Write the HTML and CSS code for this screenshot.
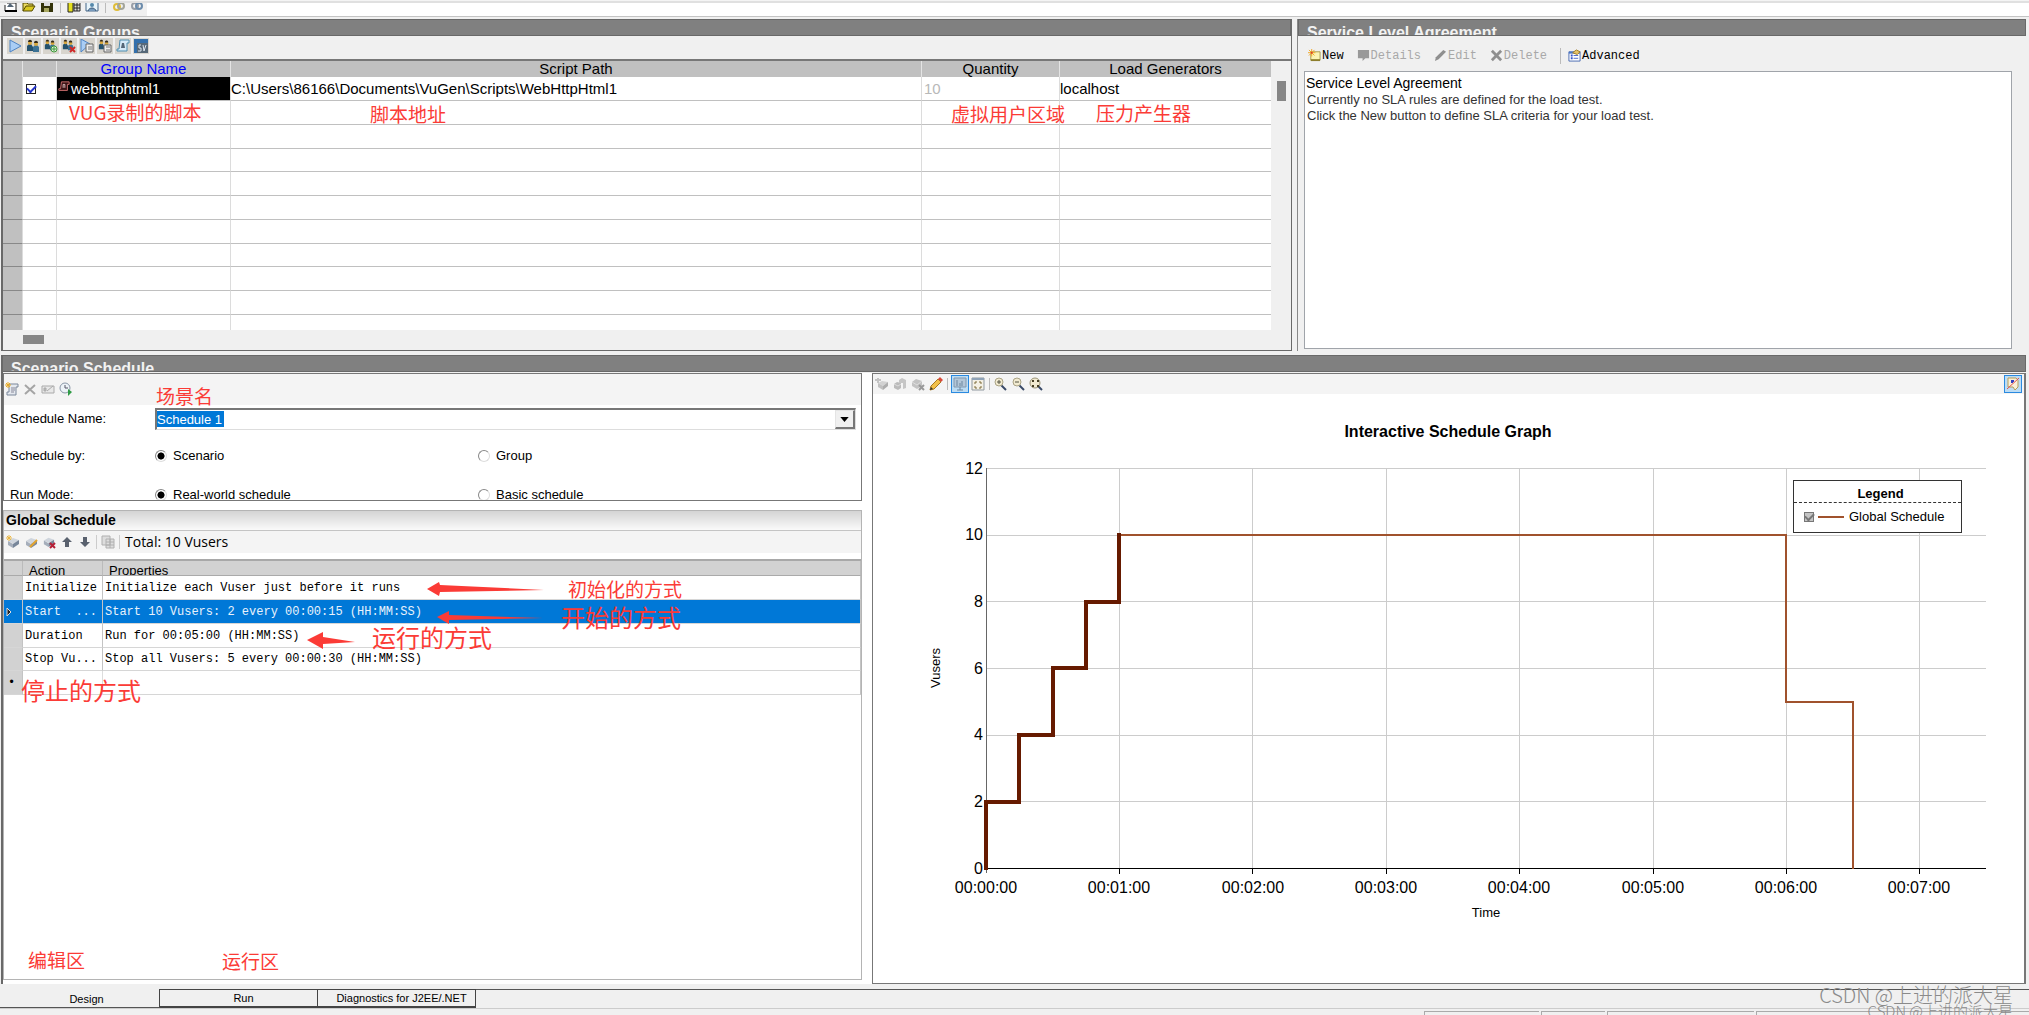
FILE: index.html
```html
<!DOCTYPE html>
<html lang="en">
<head>
<meta charset="utf-8">
<title>LoadRunner Controller - Scenario Design</title>
<link rel="stylesheet" href="styles.css">
</head>
<body>
<svg class="symbols" aria-hidden="true">
  <symbol id="new-doc" viewBox="0 0 14 14"><path d="M3 4h9v8H1V6" fill="#fff" stroke="#222"/><path d="M3 8l3-4 4 4z" fill="#567"/><path d="M1 12h12" stroke="#000" stroke-width="2"/></symbol>
  <symbol id="open" viewBox="0 0 14 14"><path d="M1 12V4h4l1 1h5v2" fill="#e8d860" stroke="#554a00"/><path d="M1 12l3-5h9l-3 5z" fill="#d9c820" stroke="#554a00"/></symbol>
  <symbol id="save" viewBox="0 0 14 14"><path d="M1 3h12v10H1z" fill="#33330a"/><path d="M4 3h6v4H4z" fill="#ddd"/><path d="M4 9h5v4H4z" fill="#a8a860"/></symbol>
  <symbol id="design" viewBox="0 0 14 14"><path d="M1 2h5v11H1z" fill="#e5df20" stroke="#222"/><path d="M7 3h6v9H7z" fill="#ddd" stroke="#222"/><path d="M7 6h6M7 9h6M10 3v9" stroke="#222"/></symbol>
  <symbol id="host" viewBox="0 0 14 14"><path d="M1 2h12v10H1z" fill="#e8f4fa" stroke="#468"/><circle cx="7" cy="6" r="2" fill="#58a"/><path d="M3 12c1-4 7-4 8 0" fill="#79b" stroke="#357"/></symbol>
  <symbol id="rings-y" viewBox="0 0 14 14"><g fill="none" stroke-width="2"><circle cx="5" cy="8" r="3" stroke="#e0bd38"/><circle cx="9" cy="7" r="3" stroke="#a3a59a"/></g></symbol>
  <symbol id="rings-b" viewBox="0 0 14 14"><g fill="none" stroke-width="2"><circle cx="5" cy="7" r="3" stroke="#999fa8"/><circle cx="9" cy="7" r="3" stroke="#6c8cac"/></g></symbol>
  <symbol id="play" viewBox="0 0 14 14"><path d="M2 1l11 6-11 6z" fill="#a9cdf5" stroke="#4f84c4"/></symbol>
  <symbol id="people" viewBox="0 0 14 14"><path d="M1 12V7l2-2h2l2 3v4z" fill="#24526e"/><path d="M7 13V8l2-2h2l2 2v5z" fill="#3c7295"/><circle cx="4" cy="4" r="2" fill="#d8a73c"/><circle cx="10" cy="5" r="2" fill="#d8a73c"/><path d="M2 3c0-3 4-3 4 0M8 4c0-3 4-3 4 0" fill="#332a1a"/></symbol>
  <symbol id="people-add" viewBox="0 0 14 14"><use href="#people" width="12" height="12"/><circle cx="10" cy="10" r="3" fill="#dff0dc" stroke="#3f9a3a"/><path d="M8 10h4M10 8v4" stroke="#3f9a3a"/></symbol>
  <symbol id="people-del" viewBox="0 0 14 14"><use href="#people" width="12" height="12"/><path d="M8 8l5 5M13 8l-5 5" stroke="#d02828" stroke-width="2"/></symbol>
  <symbol id="play-doc" viewBox="0 0 14 14"><path d="M1 0l9 5-9 8z" fill="#a9cdf5" stroke="#4f84c4"/><path d="M6 5h7v8H6z" fill="#eee" stroke="#666"/><path d="M8 8h4M8 10h4" stroke="#777"/></symbol>
  <symbol id="people-doc" viewBox="0 0 14 14"><use href="#people" width="12" height="12"/><path d="M6 6h7v7H6z" fill="#eee" stroke="#666"/><path d="M8 8h4M8 11h4" stroke="#777"/></symbol>
  <symbol id="scroll" viewBox="0 0 14 14"><path d="M4 1h9v3h-2v8H1v-2h2z" fill="#d6eaf8" stroke="#4f8eb0"/><path d="M5 9l1-5h2l1 5z" fill="#567"/></symbol>
  <symbol id="sv" viewBox="0 0 14 14"><path d="M0 0h14v14H0z" fill="#3470ac"/><path d="M3 4h11v10H3z" fill="#576978"/><path d="M7 6H5v3h2v3H4M9 6l1 6 2-6" fill="none" stroke="#dde6f0"/></symbol>
  <symbol id="add-page" viewBox="0 0 14 14"><path d="M3 3h10v9H3z" fill="#fbf5b4" stroke="#a89a48"/><path d="M3 12h10" stroke="#8d7e2c" stroke-width="2"/><path d="M4 0v8M0 4h8M1 1l6 6M7 1L1 7" stroke="#f0a520"/><circle cx="4" cy="4" r="1" fill="#d33"/></symbol>
  <symbol id="details" viewBox="0 0 14 14"><path d="M1 1h12v9H9l-3 3v-3H1z" fill="#999"/></symbol>
  <symbol id="pen" viewBox="0 0 14 14"><path d="M1 13l1-4 8-8 3 2-8 8z" fill="#8f8f8f"/></symbol>
  <symbol id="cross" viewBox="0 0 14 14"><path d="M2 2l10 10M12 2L2 12" stroke="#8f8f8f" stroke-width="3"/></symbol>
  <symbol id="cross-thin" viewBox="0 0 14 14"><path d="M2 3l10 9M12 3L2 12" stroke="#a5a5a5" stroke-width="2"/></symbol>
  <symbol id="advanced" viewBox="0 0 14 14"><path d="M1 3h12v10H1z" fill="#fff" stroke="#4668b0"/><path d="M1 3h12v2H1z" fill="#4a78c8"/><path d="M3 7h2M3 10h2" stroke="#35c" stroke-width="2"/><path d="M6 7h5M6 10h5" stroke="#46c"/><path d="M5 4l4-3 4 2-3 3z" fill="#e5c368" stroke="#a07c28"/></symbol>
  <symbol id="new-sched" viewBox="0 0 14 14"><path d="M4 2h9v3h-2v8H2v-3h2z" fill="#e4e8ee" stroke="#7a879a"/><path d="M6 6h4M6 8h4M6 10h3" stroke="#889"/><path d="M3 0v6M0 3h6M1 1l4 4M5 1L1 5" stroke="#e8aa25"/></symbol>
  <symbol id="rename" viewBox="0 0 14 14"><path d="M1 4h12v7H1z" fill="#e8e8e8" stroke="#aaa"/><path d="M3 6h2v3H3zM6 9l6-5" fill="#bbb" stroke="#aaa"/></symbol>
  <symbol id="clock" viewBox="0 0 14 14"><circle cx="6" cy="6" r="5" fill="#edf3f8" stroke="#8b98a8"/><path d="M6 3v3h3" fill="none" stroke="#556"/><path d="M9 7l4 3-4 4z" fill="#2f9b45"/></symbol>
  <symbol id="brick" viewBox="0 0 14 14"><path d="M2 6l5-3 6 2-5 4z" fill="#cfd5dd"/><path d="M2 6v4l5 3V9z" fill="#a5aebb"/><path d="M7 9l6-4v4l-6 4z" fill="#77869a"/></symbol>
  <symbol id="brick-add" viewBox="0 0 14 14"><use href="#brick" width="14" height="14"/><path d="M3 0v6M0 3h6M1 1l4 4M5 1L1 5" stroke="#eab745"/></symbol>
  <symbol id="brick-edit" viewBox="0 0 14 14"><use href="#brick" width="14" height="14"/><path d="M6 12l7-7" stroke="#e3a52e" stroke-width="2"/></symbol>
  <symbol id="brick-del" viewBox="0 0 14 14"><use href="#brick" width="13" height="13"/><path d="M8 8l5 5M13 8l-5 5" stroke="#b51f36" stroke-width="2"/></symbol>
  <symbol id="up" viewBox="0 0 14 14"><path d="M7 2l5 5H9v5H5V7H2z" fill="#59616e"/></symbol>
  <symbol id="down" viewBox="0 0 14 14"><path d="M7 12l5-5H9V2H5v5H2z" fill="#59616e"/></symbol>
  <symbol id="copy" viewBox="0 0 14 14"><path d="M1 1h8v9H1zM5 4h8v9H5z" fill="#ddd" stroke="#b0b0b0"/><path d="M5 7h8M5 10h8M9 4v9" stroke="#b0b0b0"/></symbol>
  <symbol id="g-add" viewBox="0 0 14 14"><path d="M3 6l4-2 6 1-5 4z" fill="#d2d2d2"/><path d="M3 6v4l5 3V9z" fill="#c0c0c0"/><path d="M8 9l5-4v4l-5 4z" fill="#adadad"/><path d="M3 1v5M0 3h6" stroke="#c4c4c4" stroke-width="2"/></symbol>
  <symbol id="g-split" viewBox="0 0 14 14"><path d="M1 7l3-2 4 1v5l-3 2-4-2z" fill="#bbb"/><path d="M6 3l3-2 4 2v8l-3 1V6H6z" fill="#c6c6c6"/><path d="M1 7l4 2 3-2" fill="none" stroke="#ddd"/></symbol>
  <symbol id="g-brick-del" viewBox="0 0 14 14"><path d="M1 5l4-3 6 2v5l-5 3-5-3z" fill="#c3c3c3"/><path d="M1 5l5 3 5-4" fill="none" stroke="#ddd"/><path d="M8 8l5 5M13 8l-5 5" stroke="#999" stroke-width="2"/></symbol>
  <symbol id="pencil" viewBox="0 0 14 14"><path d="M1 13l1-4 7-7 3 3-7 7z" fill="#f2c14a" stroke="#a87920"/><path d="M9 2l2-2 3 3-2 2z" fill="#d84a3a"/><path d="M1 13l1-3 2 2z" fill="#333"/></symbol>
  <symbol id="monitor" viewBox="0 0 14 14"><path d="M1 1h12v9H1z" fill="#b3c6d8" stroke="#8298ae"/><path d="M4 9V3M7 9V6M9 9V4M4 13h6M7 10v3" stroke="#6d87a0" fill="none"/></symbol>
  <symbol id="fit" viewBox="0 0 14 14"><path d="M1 1h12v12H1z" fill="#f4f0e4" stroke="#8f989f"/><path d="M1 1h12v2H1z" fill="#8fa3b8"/><path d="M4 7V5h2M8 5h2v2M4 9v2h2M8 11h2V9" fill="none" stroke="#7d6a38"/></symbol>
  <symbol id="zoom-in" viewBox="0 0 14 14"><path d="M8 8l5 5" stroke="#394a68" stroke-width="2"/><circle cx="6" cy="5" r="4" fill="#f1ead0" stroke="#aaa385"/><path d="M4 5h4M6 3v4" stroke="#554"/></symbol>
  <symbol id="zoom-out" viewBox="0 0 14 14"><path d="M8 8l5 5" stroke="#394a68" stroke-width="2"/><circle cx="6" cy="5" r="4" fill="#f1ead0" stroke="#aaa385"/><path d="M4 5h4" stroke="#554"/></symbol>
  <symbol id="zoom-fit" viewBox="0 0 14 14"><path d="M9 9l4 4" stroke="#394a68" stroke-width="2"/><circle cx="6" cy="6" r="5" fill="#f1ead0" stroke="#999275"/><path d="M4 5V4h1M8 4h1v1M4 8v1h1M8 9h1V8" fill="none" stroke="#443d22" stroke-width="2"/></symbol>
  <symbol id="no-legend" viewBox="0 0 14 14"><path d="M2 1h8l2 2v7l-3 3-2-3H2z" fill="#f8f0da" stroke="#b79d58"/><path d="M5 4h3M6 3v3" stroke="#3340c0" stroke-width="2"/><path d="M1 12L13 1" stroke="#e05050"/></symbol>
</svg>

<header class="app-toolbar">
  <div class="app-tools">
    <button aria-label="New"><svg><use href="#new-doc"/></svg></button>
    <button aria-label="Open"><svg><use href="#open"/></svg></button>
    <button aria-label="Save"><svg><use href="#save"/></svg></button>
    <span class="sep"></span>
    <button aria-label="Design view"><svg><use href="#design"/></svg></button>
    <button aria-label="Load generators"><svg><use href="#host"/></svg></button>
    <span class="sep"></span>
    <button aria-label="Connect"><svg><use href="#rings-y"/></svg></button>
    <button aria-label="Disconnect"><svg><use href="#rings-b"/></svg></button>
  </div>
</header>

<main>
  <div class="top-row">
    <section class="groups">
      <h2 class="title">Scenario Groups</h2>
      <div class="group-tools">
        <button aria-label="Start"><svg><use href="#play"/></svg></button>
        <button aria-label="Vusers"><svg><use href="#people"/></svg></button>
        <button aria-label="Add group"><svg><use href="#people-add"/></svg></button>
        <button aria-label="Remove group"><svg><use href="#people-del"/></svg></button>
        <button aria-label="Run-time settings"><svg><use href="#play-doc"/></svg></button>
        <button aria-label="Details"><svg><use href="#people-doc"/></svg></button>
        <button aria-label="View script"><svg><use href="#scroll"/></svg></button>
        <button aria-label="Service virtualization"><svg><use href="#sv"/></svg></button>
      </div>
      <div class="grid-area">
        <div class="grid-clip">
          <table class="group-grid">
            <colgroup><col class="c-sel"><col class="c-check"><col class="c-name"><col><col class="c-qty"><col class="c-gen"></colgroup>
            <thead><tr><th></th><th></th><th class="sorted">Group Name</th><th>Script Path</th><th>Quantity</th><th>Load Generators</th></tr></thead>
            <tbody>
              <tr><td></td><td><input type="checkbox" class="tick" checked aria-label="Enable webhttphtml1"></td><td class="picked"><svg viewBox="0 0 14 14"><path d="M4 1h9v3h-2v7H1V9h2z" fill="#3a1416" stroke="#d77"/><path d="M6 8V4h2v4" fill="none" stroke="#ecc"/></svg>webhttphtml1</td><td>C:\Users\86166\Documents\VuGen\Scripts\WebHttpHtml1</td><td class="dim">10</td><td>localhost</td></tr>
              <tr><td></td><td></td><td></td><td></td><td></td><td></td></tr>
              <tr><td></td><td></td><td></td><td></td><td></td><td></td></tr>
              <tr><td></td><td></td><td></td><td></td><td></td><td></td></tr>
              <tr><td></td><td></td><td></td><td></td><td></td><td></td></tr>
              <tr><td></td><td></td><td></td><td></td><td></td><td></td></tr>
              <tr><td></td><td></td><td></td><td></td><td></td><td></td></tr>
              <tr><td></td><td></td><td></td><td></td><td></td><td></td></tr>
              <tr><td></td><td></td><td></td><td></td><td></td><td></td></tr>
              <tr><td></td><td></td><td></td><td></td><td></td><td></td></tr>
              <tr><td></td><td></td><td></td><td></td><td></td><td></td></tr>
            </tbody>
          </table>
        </div>
        <div class="vbar"><span></span></div>
        <div class="hbar"><span></span></div>
      </div>
    </section>

    <section class="sla">
      <h2 class="title">Service Level Agreement</h2>
      <div class="sla-tools">
        <button><svg><use href="#add-page"/></svg>New</button>
        <button disabled><svg><use href="#details"/></svg>Details</button>
        <button disabled><svg><use href="#pen"/></svg>Edit</button>
        <button disabled><svg><use href="#cross"/></svg>Delete</button>
        <span class="sep"></span>
        <button><svg><use href="#advanced"/></svg>Advanced</button>
      </div>
      <div class="sla-box">
        <h3>Service Level Agreement</h3>
        <p>Currently no SLA rules are defined for the load test.</p>
        <p>Click the New button to define SLA criteria for your load test.</p>
      </div>
    </section>
  </div>

  <section class="schedule">
    <h2 class="title">Scenario Schedule</h2>
    <div class="bottom-row">
      <div class="left-col">
        <form class="definition">
          <div class="tools sched-tools">
            <button type="button" aria-label="New schedule"><svg><use href="#new-sched"/></svg></button>
            <button type="button" aria-label="Delete schedule"><svg><use href="#cross-thin"/></svg></button>
            <button type="button" aria-label="Rename schedule"><svg><use href="#rename"/></svg></button>
            <button type="button" aria-label="Start time"><svg><use href="#clock"/></svg></button>
          </div>
          <div class="field">
            <label for="sname">Schedule Name:</label>
            <div class="combo"><input id="sname" type="text" value="Schedule 1"><button type="button" aria-label="Show schedules"><svg viewBox="0 0 10 6"><path d="M0 0h10L5 6z"/></svg></button></div>
          </div>
          <div class="field choices">
            <span>Schedule by:</span>
            <label><input type="radio" name="by" checked>Scenario</label>
            <label><input type="radio" name="by">Group</label>
          </div>
          <div class="field choices last">
            <span>Run Mode:</span>
            <label><input type="radio" name="mode" checked>Real-world schedule</label>
            <label><input type="radio" name="mode">Basic schedule</label>
          </div>
        </form>

        <div class="global">
          <h3>Global Schedule</h3>
          <div class="tools global-tools">
            <button aria-label="Add action"><svg><use href="#brick-add"/></svg></button>
            <button aria-label="Edit action"><svg><use href="#brick-edit"/></svg></button>
            <button aria-label="Delete action"><svg><use href="#brick-del"/></svg></button>
            <button aria-label="Move up"><svg><use href="#up"/></svg></button>
            <button aria-label="Move down"><svg><use href="#down"/></svg></button>
            <span class="sep"></span>
            <button aria-label="Copy"><svg><use href="#copy"/></svg></button>
            <span class="sep"></span>
            <span class="total">Total: 10 Vusers</span>
          </div>
          <table class="actions">
            <colgroup><col class="a-sel"><col class="a-name"><col></colgroup>
            <thead><tr><th></th><th><div>Action</div></th><th><div>Properties</div></th></tr></thead>
            <tbody>
              <tr><td></td><td>Initialize</td><td>Initialize each Vuser just before it runs</td></tr>
              <tr class="current"><td><svg viewBox="0 0 6 10"><path d="M1 1l4 4-4 4z" fill="#222" stroke="#ddd"/></svg></td><td>Start&nbsp; ...</td><td>Start 10 Vusers: 2 every 00:00:15 (HH:MM:SS)</td></tr>
              <tr><td></td><td>Duration</td><td>Run for 00:05:00 (HH:MM:SS)</td></tr>
              <tr><td></td><td>Stop Vu...</td><td>Stop all Vusers: 5 every 00:00:30 (HH:MM:SS)</td></tr>
              <tr><td class="fresh">•</td><td></td><td></td></tr>
            </tbody>
          </table>
        </div>
      </div>

      <div class="graph">
        <div class="tools graph-tools">
          <button aria-label="Add"><svg><use href="#g-add"/></svg></button>
          <button aria-label="Split"><svg><use href="#g-split"/></svg></button>
          <button aria-label="Delete"><svg><use href="#g-brick-del"/></svg></button>
          <button aria-label="Edit graph"><svg><use href="#pencil"/></svg></button>
          <span class="sep"></span>
          <button class="pressed" aria-label="Show graph"><svg><use href="#monitor"/></svg></button>
          <button aria-label="Full view"><svg><use href="#fit"/></svg></button>
          <span class="sep"></span>
          <button aria-label="Zoom in"><svg><use href="#zoom-in"/></svg></button>
          <button aria-label="Zoom out"><svg><use href="#zoom-out"/></svg></button>
          <button aria-label="Zoom reset"><svg><use href="#zoom-fit"/></svg></button>
          <button class="pressed end" aria-label="Toggle legend"><svg><use href="#no-legend"/></svg></button>
        </div>
        <div class="chart">
          <svg class="plot" viewBox="0 0 1151 580" preserveAspectRatio="xMinYMin meet" role="img" aria-label="Interactive Schedule Graph">
            <text class="plot-title" x="575" y="43">Interactive Schedule Graph</text>
            <g transform="translate(113 74)">
              <path class="gridlines" d="M0 .5H1000M0 67.5H1000M0 133.5H1000M0 200.5H1000M0 267.5H1000M0 333.5H1000M133.5 0V400M266.5 0V400M400.5 0V400M533.5 0V400M667.5 0V400M800.5 0V400M933.5 0V400"/>
              <path class="y-axis" d="M.5 0V405"/>
              <path class="x-axis" d="M0 400.5H1000M133.5 400V406M266.5 400V406M400.5 400V406M533.5 400V406M667.5 400V406M800.5 400V406M933.5 400V406"/>
              <path class="run" d="M133 67H800V234H867V401"/>
              <path class="ramp" d="M0 400V334H33V267H67V200H100V134H133V67"/>
              <g class="y-labels"><text x="-3" y="6">12</text><text x="-3" y="72">10</text><text x="-3" y="139">8</text><text x="-3" y="206">6</text><text x="-3" y="272">4</text><text x="-3" y="339">2</text><text x="-3" y="406">0</text></g>
              <g class="x-labels"><text x="0" y="425">00:00:00</text><text x="133" y="425">00:01:00</text><text x="267" y="425">00:02:00</text><text x="400" y="425">00:03:00</text><text x="533" y="425">00:04:00</text><text x="667" y="425">00:05:00</text><text x="800" y="425">00:06:00</text><text x="933" y="425">00:07:00</text></g>
              <text class="axis-name" x="500" y="449">Time</text>
              <text class="axis-name" transform="translate(-46 200) rotate(-90)">Vusers</text>
            </g>
          </svg>
          <div class="legend">
            <h4>Legend</h4>
            <label><input type="checkbox" class="tick" checked disabled><i></i>Global Schedule</label>
          </div>
        </div>
      </div>
    </div>
  </section>
</main>

<nav class="tabs">
  <button class="active">Design</button>
  <button>Run</button>
  <button>Diagnostics for J2EE/.NET</button>
</nav>
<footer class="status"><span class="s1"></span><span class="s2"></span><span class="s3"></span><span class="s4"></span></footer>

<div class="notes">
  <span class="note n-script">VUG录制的脚本</span>
  <span class="note n-path">脚本地址</span>
  <span class="note n-users">虚拟用户区域</span>
  <span class="note n-load">压力产生器</span>
  <span class="note n-scene">场景名</span>
  <span class="note n-init">初始化的方式</span>
  <span class="note big n-start">开始的方式</span>
  <span class="note big n-run">运行的方式</span>
  <span class="note big n-stop">停止的方式</span>
  <span class="note n-edit">编辑区</span>
  <span class="note n-exec">运行区</span>
  <svg class="arrows" viewBox="0 0 250 80"><path d="M127 9l12-7 1 3 104 5-104 2-1 4zM137 37l12-6v4l94 3-94 2v4zM7 60l16-8v5l32 5-32 2v5z"/></svg>
  <span class="mark m-one">CSDN @上进的派大星</span>
  <span class="mark m-two">CSDN @上进的派大星</span>
</div>
</body>
</html>
```
FILE: styles.css
```css
* { box-sizing: border-box; }

body {
  margin: 0;
  height: 100vh;
  display: flex;
  flex-direction: column;
  position: relative;
  overflow: hidden;
  background: #f0f0f0;
  color: #000;
  font: 13px/16px "Liberation Sans", Arial, sans-serif;
}

h2, h3, h4, p { margin: 0; }
button { margin: 0; padding: 0; border: 0; background: none; font: inherit; color: inherit; }
button svg { display: block; width: 14px; height: 14px; }
.symbols { position: absolute; width: 0; height: 0; }
table { border-collapse: separate; border-spacing: 0; table-layout: fixed; width: 100%; }
th, td { padding: 0; font-weight: normal; white-space: nowrap; overflow: hidden; }

/* application toolbar */
.app-toolbar {
  flex: none;
  height: 17px;
  overflow: hidden;
  background: #fff;
  border-top: 1px solid #f4f4f4;
  border-bottom: 1px solid #c4c4c4;
}
.app-tools {
  display: flex;
  align-items: flex-end;
  gap: 4px;
  width: 147px;
  height: 13px;
  padding: 0 4px 3px;
  overflow: hidden;
  background: #f0f0f0;
}
.app-toolbar::before { content: ""; display: block; height: 2px; background: #e0e0e0; }
.sep { width: 1px; height: 12px; background: #bbb; flex: none; }
.app-tools .sep { margin: 0 2px; }

main { flex: 1; min-height: 0; display: flex; flex-direction: column; gap: 4px; padding: 2px 3px 0 1px; }
.top-row { display: grid; grid-template: 332px / 1291fr 729fr; gap: 5px; flex: none; }

.title {
  flex: none;
  height: 17px;
  padding: 4px 8px 0;
  overflow: hidden;
  background: #808080;
  border: 1px solid #696969;
  color: #f2f2f2;
  font-size: 16px;
  line-height: 18px;
}

/* scenario groups */
.groups { display: flex; flex-direction: column; min-height: 0; border: 1px solid #696969; border-width: 0 1px 1px 2px; }
.groups .title { margin-left: -1px; }
.group-tools { display: flex; gap: 2px; height: 23px; padding: 2px 4px; flex: none; }
.group-tools button { width: 16px; height: 16px; padding: 1px; background: #d8d5ce; }
.grid-area {
  flex: 1;
  min-height: 0;
  display: grid;
  grid-template: minmax(0, 1fr) 20px / minmax(0, 1fr) 20px;
  border-top: 2px solid #777;
}
.grid-clip { overflow: hidden; background: #fff; }
.group-grid { font-size: 15px; line-height: 16px; }
.c-sel { width: 20px; }
.c-check { width: 34px; }
.c-name { width: 174px; }
.c-qty { width: 138px; }
.c-gen { width: 211px; }
.group-grid th { height: 16px; background: #c0c0c0; border-right: 1px solid #e4e4e4; text-align: center; }
.group-grid .sorted { color: #00f; }
.group-grid td { height: 24px; border-right: 1px solid #dcdcdc; border-bottom: 1px solid #c0c0c0; }
.group-grid tr:nth-child(4n) td { height: 23px; }
.group-grid td:first-child { background: #c0c0c0; border-bottom-color: #888; }
.group-grid td:last-child, .group-grid th:last-child { border-right: 0; }
.group-grid .picked { background: #000; color: #fff; }
.picked svg { width: 12px; height: 12px; margin: 0 1px 4px; vertical-align: bottom; }
.group-grid .dim { color: #b8b8b8; padding-left: 2px; }
.tick {
  appearance: none;
  flex: none;
  display: block;
  width: 10px;
  height: 10px;
  margin: 0 0 0 3px;
  border: 1px solid #222;
  background: #fff;
}
.tick::before {
  content: "";
  display: block;
  width: 7px;
  height: 4px;
  border: 2px solid #23c;
  border-width: 0 0 2px 2px;
  rotate: -45deg;
}
.vbar { padding: 20px 6px 0; }
.vbar span { display: block; width: 9px; height: 20px; background: #868686; }
.hbar { padding: 5px 0 0 20px; }
.hbar span { display: block; width: 21px; height: 9px; background: #868686; }

/* service level agreement */
.sla { display: flex; flex-direction: column; border-left: 1px solid #888; }
.sla-tools {
  display: flex;
  align-items: center;
  gap: 13px;
  height: 35px;
  padding: 4px 10px 0;
  font: 12px/16px "Liberation Mono", "Courier New", monospace;
}
.sla-tools button { display: flex; align-items: center; gap: 1px; }
.sla-tools button:disabled { color: #a8a8a8; }
.sla-tools svg { width: 13px; height: 13px; }
.sla-tools .sep { margin-right: -6px; height: 16px; }
.sla-box { flex: 1; margin: 0 14px 2px 6px; padding: 2px 1px; background: #fff; border: 1px solid #a0a4aa; }
.sla-box h3 { font-size: 14px; font-weight: normal; line-height: 18px; }
.sla-box p { padding-left: 1px; color: #333; line-height: 16px; }

/* scenario schedule */
.schedule { flex: 1; min-height: 0; display: flex; flex-direction: column; border-left: 2px solid #696969; }
.schedule .title { margin-left: -1px; }
.bottom-row {
  flex: 1;
  min-height: 0;
  display: grid;
  grid-template-columns: 859fr 1154fr;
  gap: 10px;
  margin-top: 1px;
  background: #fff;
}
.left-col { display: flex; flex-direction: column; gap: 9px; padding-bottom: 4px; min-height: 0; }
.definition { flex: none; height: 128px; overflow: hidden; border: 1px solid #777; }
.tools { display: flex; align-items: center; background: #f4f4f4; }
.sched-tools { height: 31px; gap: 4px; padding: 0 1px 2px; margin-bottom: 3px; }
.field { display: flex; align-items: center; padding: 0 5px 0 6px; }
.field > :first-child { width: 145px; flex: none; }
.combo { flex: 1; display: flex; height: 22px; border: 1px solid #ddd; border-top: 2px solid #777; border-left: 2px solid #777; }
.combo input {
  flex: 1;
  min-width: 0;
  border: 0;
  padding: 0;
  color: #fff;
  font: inherit;
  outline: 0;
  background: linear-gradient(#0078d7, #0078d7) 0 1px / 67px 16px no-repeat #fff;
}
.combo button { width: 20px; background: #f0f0f0; border: 1px solid #e4e4e4; border-right: 2px solid #777; border-bottom: 2px solid #777; }
.combo button svg { width: 9px; height: 5px; margin: auto; }
.choices { height: 39px; margin-top: 6px; }
.choices.last { margin-top: 0; }
.choices label { display: flex; align-items: center; gap: 6px; width: 323px; }
.choices input {
  appearance: none;
  width: 12px;
  height: 12px;
  margin: 0;
  border: 1px solid #888;
  border-right-color: #ddd;
  border-bottom-color: #ddd;
  border-radius: 50%;
  background: #fff;
}
.choices input:checked { background: radial-gradient(#000 45%, #fff 55%); }

.global { flex: 1; min-height: 0; border: 1px solid #b4b4b4; background: #fff; }
.global h3 { height: 20px; padding-left: 2px; font-size: 14px; line-height: 18px; background: linear-gradient(#d4d4d4, #fafafa); border-bottom: 1px solid #c4c4c4; }
.global-tools { height: 22px; gap: 4px; padding-left: 2px; margin-bottom: 6px; }
.global-tools .sep { height: 14px; background: #ccc; }
.total { padding-left: 1px; font: 14px/20px "Open Sans", "Noto Sans", sans-serif; }
.actions { border-top: 2px solid #a8a8a8; font: 12px/16px "Liberation Mono", "Courier New", monospace; }
.a-sel { width: 19px; }
.a-name { width: 80px; }
.actions th { height: 15px; background: #d2d2d2; border-bottom: 1px solid #aaa; border-right: 1px solid #bbb; font: 13px/14px "Liberation Sans", Arial, sans-serif; text-align: left; }
.actions th div { height: 14px; padding: 3px 6px 0; overflow: hidden; }
.actions td { height: 24px; padding-left: 2px; border-bottom: 1px solid #d6d6d6; border-right: 1px solid #c4c4c4; }
.actions tr:nth-child(4n) td { height: 23px; }
.actions td:first-child { background: #d2d2d2; }
.actions .current td { background: #0078d7; color: #e8f2fc; }
.actions td svg { display: block; width: 6px; height: 10px; }
.actions td.fresh { padding-left: 4px; }
.actions tr:last-child td:nth-child(2) { border-right-color: #ddd; }

/* graph */
.graph { display: flex; flex-direction: column; min-width: 0; min-height: 0; border: 1px solid #777; border-right-width: 2px; background: #fff; }
.graph-tools { flex: none; height: 20px; gap: 4px; padding: 0 2px; }
.graph-tools .pressed { width: 18px; height: 18px; padding: 1px; border: 1px solid #2a8ae0; background: #bcdcf4; }
.graph-tools .pressed + button { margin-left: -2px; }
.graph-tools .sep { margin-right: -1px; }
.graph-tools .end { margin-left: auto; }
.chart { flex: 1; min-height: 0; position: relative; }
.plot { display: block; width: 100%; height: 100%; }
.plot-title { font-size: 16px; font-weight: bold; text-anchor: middle; }
.gridlines { fill: none; stroke: #ccc; }
.y-axis { stroke: #666; }
.x-axis { stroke: #000; }
.run { fill: none; stroke: #a0522d; stroke-width: 2; }
.ramp { fill: none; stroke: #661a00; stroke-width: 4; stroke-linecap: square; }
.y-labels { font-size: 16px; text-anchor: end; }
.x-labels { font-size: 16px; text-anchor: middle; }
.axis-name { font-size: 13px; text-anchor: middle; }
.legend { position: absolute; top: 86px; right: 62px; width: 169px; height: 53px; border: 1px solid #333; background: #fff; }
.legend h4 { height: 22px; padding: 4px 0 0 6px; border-bottom: 1px dashed #333; text-align: center; line-height: 18px; }
.legend label { display: flex; align-items: center; height: 28px; padding-left: 10px; }
.legend input { margin: 0 4px 0 0; border-color: #777; background: #c4c4c4; }
.legend input::before { border-color: #777; }
.legend i { width: 26px; height: 2px; margin-right: 5px; background: #a0522d; }

/* bottom tabs and status bar */
.tabs { flex: none; display: flex; height: 20px; margin-top: 5px; font-size: 11px; line-height: 16px; border-bottom: 1px solid #ccc; }
.tabs::after { content: ""; flex: 1; border-top: 1px solid #555; }
.tabs button { width: 158px; padding-left: 10px; border: 1px solid #444; border-width: 1px 1px 2px; border-left: 0; }
.tabs .active { width: 160px; padding: 2px 0 0 14px; border-top: 0; border-bottom: 1px solid #555; }
.status { flex: none; display: flex; justify-content: flex-end; gap: 2px; height: 6px; padding-top: 2px; }
.status span { border-top: 1px solid #aaa; border-left: 1px solid #aaa; }
.s1 { width: 115px; }
.s2 { width: 64px; }
.s3 { width: 147px; }
.s4 { width: 273px; }

/* annotations drawn over the window */
.notes { position: absolute; inset: 0; overflow: hidden; pointer-events: none; font-family: "Noto Sans CJK SC", sans-serif; white-space: nowrap; }
.note { position: absolute; color: #fb3b36; font-size: 19px; line-height: 24px; }
.note.big { font-size: 24px; line-height: 28px; }
.n-script { left: 69px; top: 100px; }
.n-path { left: 370px; top: 102px; }
.n-users { left: 951px; top: 102px; }
.n-load { left: 1096px; top: 101px; }
.n-scene { left: 156px; top: 384px; }
.n-init { left: 568px; top: 577px; }
.n-start { left: 561px; top: 603px; }
.n-run { left: 372px; top: 623px; }
.n-stop { left: 21px; top: 676px; }
.n-edit { left: 28px; top: 948px; }
.n-exec { left: 222px; top: 949px; }
.arrows { position: absolute; left: 300px; top: 580px; width: 250px; height: 80px; fill: #fb3b36; }
.mark { position: absolute; color: #8a8a8a; font-weight: 300; }
.m-one { right: 16px; top: 983px; font-size: 20px; line-height: 24px; }
.m-two { right: 16px; top: 1001px; font-size: 15px; line-height: 20px; }
```
